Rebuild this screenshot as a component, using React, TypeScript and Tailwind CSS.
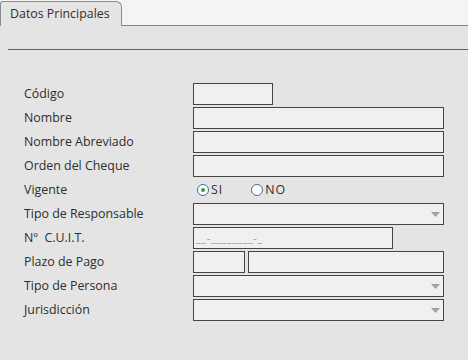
import { ReactNode } from 'react';

function Row({ label, children }: { label: string; children: ReactNode }) {
  return (
    <div className="flex h-[22px] items-center">
      <div className="w-[169px] whitespace-pre text-[12.4px] text-[#2e2e2e]">{label}</div>
      {children}
    </div>
  );
}

function Box({ w }: { w: string }) {
  return <div className={`h-[22px] ${w} border border-[#444] bg-[#f0f0f0]`} />;
}

function Select() {
  return (
    <div className="flex h-[22px] w-[251px] items-center justify-end border border-[#444] bg-[#f0f0f0] pr-[3px]">
      <svg width="9" height="5" viewBox="0 0 9 5">
        <path d="M0 0 H9 L4.5 5 Z" fill="#a0a0a0" />
      </svg>
    </div>
  );
}

function Radio({ checked, label }: { checked?: boolean; label: string }) {
  return (
    <div className="flex items-center gap-[2px]">
      <div className="flex h-[12px] w-[12px] items-center justify-center rounded-full border border-[#3d6fa6] bg-white">
        {checked && <div className="h-[4px] w-[4px] rounded-full bg-[#22a83a]" />}
      </div>
      <span className="text-[12.4px] tracking-[1px] text-[#2e2e2e]">{label}</span>
    </div>
  );
}

export default function App() {
  return (
    <div
      className="h-[360px] w-[468px] overflow-hidden bg-[#e4e4e4]"
      style={{ fontFamily: '"Open Sans", sans-serif' }}
    >
      {/* Tabs */}
      <div className="flex h-[26px] items-end bg-[#f4f4f4]">
        <div className="flex h-[25px] w-[122px] items-center rounded-tl-[3px] rounded-tr-[6px] border-l border-r border-t border-[#868c92] bg-[#e4e4e4] pl-[9px] text-[12.4px] text-[#2e2e2e]">
          Datos Principales
        </div>
        <div className="h-[26px] flex-1 border-b border-[#80868c]" />
      </div>

      <div className="ml-2 mt-[23px] border-t border-[#2b6ca3]" />

      {/* Form */}
      <div className="mt-[33px] flex flex-col gap-[2px] pl-6">
        <Row label="Código">
          <Box w="w-[80px]" />
        </Row>
        <Row label="Nombre">
          <Box w="w-[251px]" />
        </Row>
        <Row label="Nombre Abreviado">
          <Box w="w-[251px]" />
        </Row>
        <Row label="Orden del Cheque">
          <Box w="w-[251px]" />
        </Row>
        <Row label="Vigente">
          <div className="flex items-center gap-[28px] pl-[4px]">
            <Radio checked label="SI" />
            <Radio label="NO" />
          </div>
        </Row>
        <Row label="Tipo de Responsable">
          <Select />
        </Row>
        <Row label="Nº  C.U.I.T.">
          <div className="flex h-[22px] w-[200px] items-center border border-[#444] bg-[#f0f0f0] pl-[2px] text-[11px] tracking-[0.5px] text-[#9a9a9a]">
            __-________-_
          </div>
        </Row>
        <Row label="Plazo de Pago">
          <div className="flex gap-[3px]">
            <Box w="w-[52px]" />
            <Box w="w-[196px]" />
          </div>
        </Row>
        <Row label="Tipo de Persona">
          <Select />
        </Row>
        <Row label="Jurisdicción">
          <Select />
        </Row>
      </div>
    </div>
  );
}
